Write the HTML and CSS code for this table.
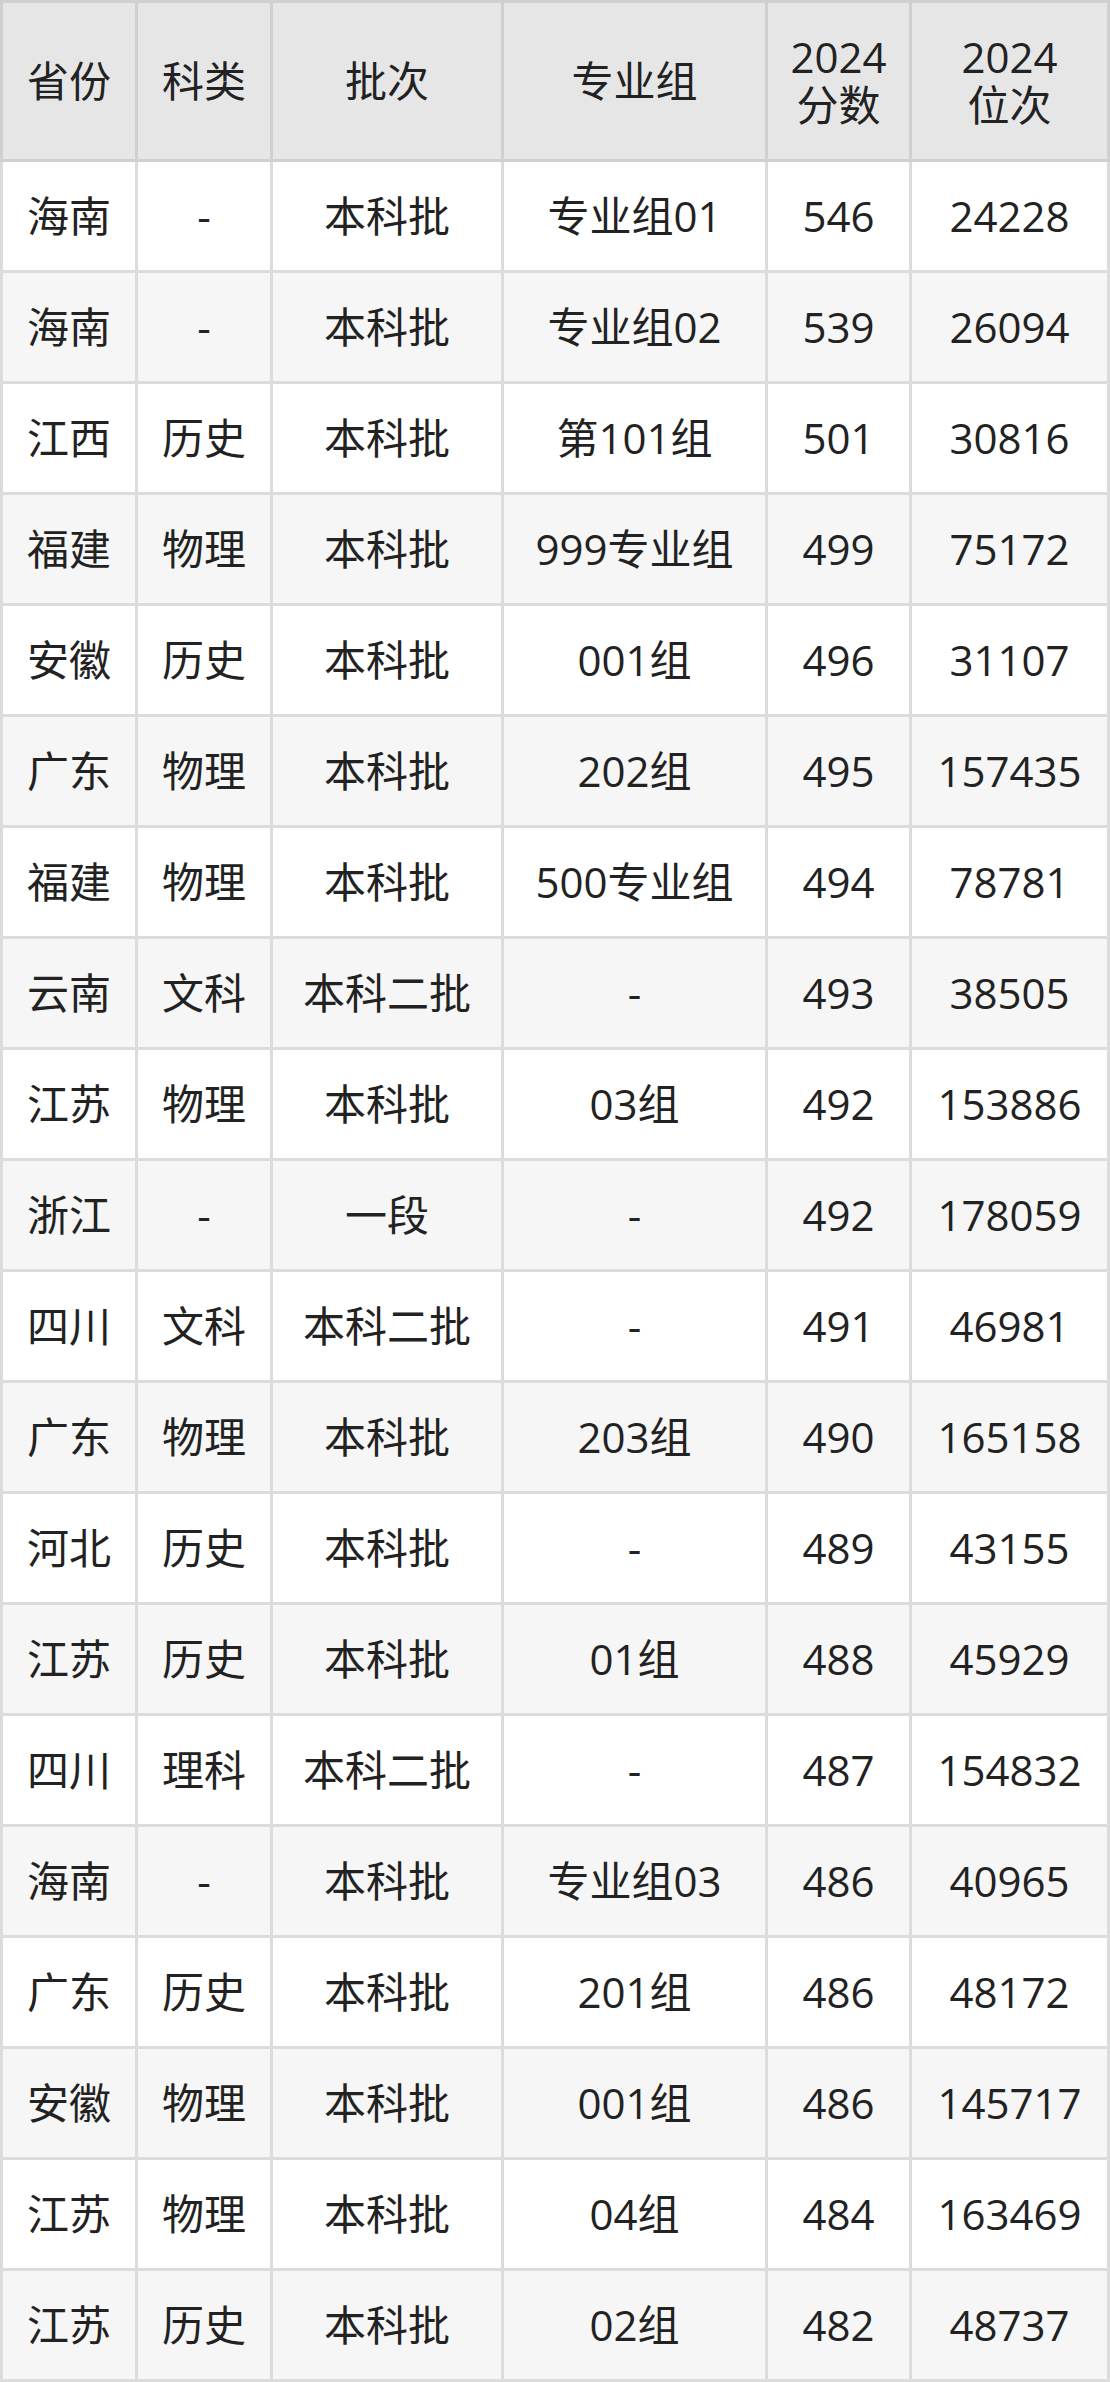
FILE: index.html
```html
<!DOCTYPE html>
<html lang="zh">
<head>
<meta charset="utf-8">
<link rel="stylesheet" href="styles.css">
</head>
<body>
<table class="score-table">
  <colgroup>
    <col class="c1"><col class="c2"><col class="c3"><col class="c4"><col class="c5"><col class="c6">
  </colgroup>
  <thead>
    <tr><th>省份</th><th>科类</th><th>批次</th><th>专业组</th><th><span class="hl">2024</span><span class="hl">分数</span></th><th><span class="hl">2024</span><span class="hl">位次</span></th></tr>
  </thead>
  <tbody>
    <tr><td>海南</td><td>-</td><td>本科批</td><td>专业组01</td><td>546</td><td>24228</td></tr>
    <tr><td>海南</td><td>-</td><td>本科批</td><td>专业组02</td><td>539</td><td>26094</td></tr>
    <tr><td>江西</td><td>历史</td><td>本科批</td><td>第101组</td><td>501</td><td>30816</td></tr>
    <tr><td>福建</td><td>物理</td><td>本科批</td><td>999专业组</td><td>499</td><td>75172</td></tr>
    <tr><td>安徽</td><td>历史</td><td>本科批</td><td>001组</td><td>496</td><td>31107</td></tr>
    <tr><td>广东</td><td>物理</td><td>本科批</td><td>202组</td><td>495</td><td>157435</td></tr>
    <tr><td>福建</td><td>物理</td><td>本科批</td><td>500专业组</td><td>494</td><td>78781</td></tr>
    <tr><td>云南</td><td>文科</td><td>本科二批</td><td>-</td><td>493</td><td>38505</td></tr>
    <tr><td>江苏</td><td>物理</td><td>本科批</td><td>03组</td><td>492</td><td>153886</td></tr>
    <tr><td>浙江</td><td>-</td><td>一段</td><td>-</td><td>492</td><td>178059</td></tr>
    <tr><td>四川</td><td>文科</td><td>本科二批</td><td>-</td><td>491</td><td>46981</td></tr>
    <tr><td>广东</td><td>物理</td><td>本科批</td><td>203组</td><td>490</td><td>165158</td></tr>
    <tr><td>河北</td><td>历史</td><td>本科批</td><td>-</td><td>489</td><td>43155</td></tr>
    <tr><td>江苏</td><td>历史</td><td>本科批</td><td>01组</td><td>488</td><td>45929</td></tr>
    <tr><td>四川</td><td>理科</td><td>本科二批</td><td>-</td><td>487</td><td>154832</td></tr>
    <tr><td>海南</td><td>-</td><td>本科批</td><td>专业组03</td><td>486</td><td>40965</td></tr>
    <tr><td>广东</td><td>历史</td><td>本科批</td><td>201组</td><td>486</td><td>48172</td></tr>
    <tr><td>安徽</td><td>物理</td><td>本科批</td><td>001组</td><td>486</td><td>145717</td></tr>
    <tr><td>江苏</td><td>物理</td><td>本科批</td><td>04组</td><td>484</td><td>163469</td></tr>
    <tr><td>江苏</td><td>历史</td><td>本科批</td><td>02组</td><td>482</td><td>48737</td></tr>
  </tbody>
</table>
</body>
</html>
```

FILE: styles.css
```css
html, body {
  margin: 0;
  padding: 0;
  background: #ffffff;
}

body {
  font-family: "Open Sans", "Noto Sans CJK SC", sans-serif;
  color: #222222;
  font-size: 42px;
}

.score-table {
  width: 1110px;
  border-collapse: collapse;
  table-layout: fixed;
}

.c1 { width: 135px; }
.c2 { width: 135px; }
.c3 { width: 231px; }
.c4 { width: 264px; }
.c5 { width: 144px; }
.c6 { width: 198px; }

.score-table th,
.score-table td {
  border: 3px solid #dcdcdc;
  text-align: center;
  vertical-align: middle;
  padding: 0;
  white-space: nowrap;
}

.score-table th {
  background: #e6e6e6;
  font-weight: normal;
  height: 156px;
  line-height: 48px;
  border-color: #d0d0d0;
}

.hl {
  display: block;
}

.score-table td {
  height: 108px;
  line-height: 50px;
}

.score-table tbody tr:nth-child(even) td {
  background: #f6f6f6;
}
```
